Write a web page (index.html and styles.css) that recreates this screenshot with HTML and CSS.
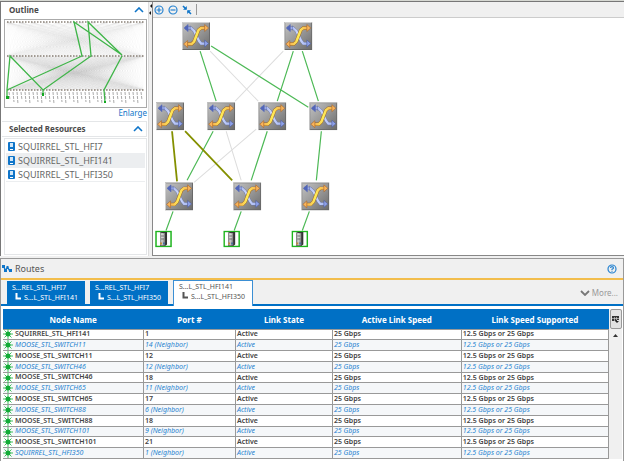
FILE: index.html
```html
<!DOCTYPE html>
<html lang="en">
<head>
<meta charset="utf-8">
<title>Topology</title>
<link rel="stylesheet" href="styles.css">
</head>
<body>
<svg class="defs" aria-hidden="true">
  <defs>
    <linearGradient id="metal" x1="0" y1="0" x2="1" y2="1">
      <stop offset="0" stop-color="#c2c2c2"/><stop offset=".5" stop-color="#989898"/><stop offset="1" stop-color="#6c6c6c"/>
    </linearGradient>
    <linearGradient id="gold" x1="0" y1="0" x2="1" y2="0">
      <stop offset="0" stop-color="#f5a850"/><stop offset=".5" stop-color="#ffee58"/><stop offset="1" stop-color="#f5a850"/>
    </linearGradient>
    <linearGradient id="sky" x1="0" y1="0" x2="1" y2="0">
      <stop offset="0" stop-color="#8fa0e0"/><stop offset=".5" stop-color="#cdd8fd"/><stop offset="1" stop-color="#a3b5f2"/>
    </linearGradient>
    <linearGradient id="steel" x1="0" y1="0" x2="1" y2="0">
      <stop offset="0" stop-color="#8b8b8b"/><stop offset=".4" stop-color="#d0d0d0"/><stop offset="1" stop-color="#777"/>
    </linearGradient>
    <symbol id="switch" viewBox="0 0 28 28">
      <rect width="28" height="28" fill="#666"/>
      <path d="M0 0H28L27 1H1V27L0 28Z" fill="#d2d2d2"/>
      <rect x="1" y="1" width="26" height="26" fill="url(#metal)"/>
      <path d="M3 6H9L12 9L17 19L19 21.500H24" fill="none" stroke="#6c77a6" stroke-width="3"/>
      <path d="M3 6H9L12 9L17 19L19 21.500H24" fill="none" stroke="url(#sky)" stroke-width="2.200"/>
      <path d="M6 2.500L2 6L6 9.500ZM8 3.500V8.500" fill="#5266b8" stroke="#5266b8" stroke-width=".6"/>
      <path d="M22.500 18L26.500 21.500L22.500 25Z" fill="#8fa2ea" stroke="#4c5a9a" stroke-width=".6"/>
      <path d="M4 22H9.500L12 19.500L16.500 8L19 6H24" fill="none" stroke="#9a6626" stroke-width="3.400"/>
      <path d="M4 22H9.500L12 19.500L16.500 8L19 6H24.100" fill="none" stroke="url(#gold)" stroke-width="2.500"/>
      <path d="M5.500 18.500L1.500 22L5.500 25.500Z" fill="#f8b45b" stroke="#a8642a" stroke-width=".6"/>
      <path d="M22.500 2.500L26.500 6L22.500 9.500Z" fill="#f8b45b" stroke="#a8642a" stroke-width=".6"/>
    </symbol>
    <symbol id="host" viewBox="0 0 17 17">
      <rect x="1" y="1" width="15" height="15" fill="#fff" stroke="#1fb41f" stroke-width="1.500"/>
      <path d="M5 2L7 1.500H12V14L10 15.500H5Z" fill="#333"/>
      <rect x="5" y="2.500" width="5" height="12.500" fill="url(#steel)"/>
      <path d="M6 4.500H9M6 6.500H9" stroke="#ddd"/>
      <path d="M6 5.500H9M6 8.500H9" stroke="#777"/>
      <rect x="5" y="12" width="2" height="2" fill="#c08a3c"/>
      <rect x="8" y="12" width="2" height="2" fill="#4a6a9c"/>
    </symbol>
    <symbol id="port" viewBox="0 0 7 9">
      <rect width="7" height="9" rx="1" fill="#0f75c9"/>
      <rect x="2" y="1" width="3" height="4" fill="#cfe6f8"/>
      <path d="M2 7.500H5" stroke="#fff"/>
    </symbol>
    <symbol id="chevron" viewBox="0 0 10 6">
      <path d="M1 5L5 1L9 5" fill="none" stroke="currentColor" stroke-width="1.600"/>
    </symbol>
    <symbol id="sun" viewBox="0 0 10 10">
      <path d="M5 0V10M0 5H10M1.500 1.500L8.500 8.500M8.500 1.500L1.500 8.500" stroke="#3fbf5d" stroke-width="1"/>
      <circle cx="5" cy="5" r="2.500" fill="#12ab37"/>
    </symbol>
    <symbol id="branch" viewBox="0 0 7 7">
      <path d="M1.500 0V5.500H6" fill="none" stroke="currentColor" stroke-width="2"/>
    </symbol>
  </defs>
</svg>

<main class="app">
  <section class="top">
    <aside class="side">
      <section>
        <h2 class="side-title">Outline<button class="icon-btn" aria-label="Collapse outline"><svg width="10" height="6"><use href="#chevron"/></svg></button></h2>
        <div class="outline-box">
          <svg class="outline" viewBox="5 20 141 87" role="img" aria-label="Fabric outline">
            <g id="fabric"></g>
            <path class="route" d="M7 90L82 56L74 22L122 55L88 22L91 56L43 90L10 56L7 90V97M43 90V94M122 56L104 90L105 102"/>
            <path class="ends" d="M6 96h3v3h-3zM42 93h2v3h-2zM104 101h2v2h-2z"/>
          </svg>
        </div>
        <a class="enlarge" href="#outline">Enlarge</a>
      </section>
      <section class="resources">
        <h2 class="side-title boxed">Selected Resources<button class="icon-btn" aria-label="Collapse resources"><svg width="10" height="6"><use href="#chevron"/></svg></button></h2>
        <ul class="list">
          <li><svg width="7" height="9"><use href="#port"/></svg>SQUIRREL_STL_HFI7</li>
          <li class="on"><svg width="7" height="9"><use href="#port"/></svg>SQUIRREL_STL_HFI141</li>
          <li><svg width="7" height="9"><use href="#port"/></svg>SQUIRREL_STL_HFI350</li>
        </ul>
      </section>
    </aside>
    <div class="splitter"><svg width="3" height="14"><path d="M1 4L3 2V6ZM0 11L2 9V13Z" fill="#111"/></svg></div>
    <section class="view">
      <div class="toolbar">
        <button class="icon-btn" aria-label="Zoom in"><svg width="10" height="10"><circle cx="5" cy="5" r="4" class="ring"/><path d="M2.500 5H7.500M5 2.500V7.500" class="ring"/></svg></button>
        <button class="icon-btn" aria-label="Zoom out"><svg width="10" height="10"><circle cx="5" cy="5" r="4" class="ring"/><path d="M2.500 5H7.500" class="ring"/></svg></button>
        <button class="icon-btn" aria-label="Fit"><svg width="10" height="10"><path d="M1 1L4 4M9 9L6 6" stroke="#0f75c9" stroke-width="1.600"/><path d="M4.800 1V4.800H1ZM5.200 9V5.200H9Z" fill="#0f75c9"/></svg></button>
        <span class="sep"></span>
      </div>
      <div class="canvas">
        <svg class="graph" viewBox="153 18 470 237" role="img" aria-label="Route topology">
          <path class="idle" d="M210 51L258 101M283 51L235 101M226 131L241 180M256 129L194 182"/>
          <path class="link" d="M200 51L216 101M211 46L308 107M293 51L277 101M302 51L318 101M213 131L187 180M267 131L251 180M321 131L316 180M173 211L166 230M241 211L234 230M309 211L302 230"/>
          <path class="hot" d="M172 131L177 181M185 131L232 180"/>
          <use href="#switch" x="182" y="22" width="28" height="28"/>
          <use href="#switch" x="284" y="22" width="28" height="28"/>
          <use href="#switch" x="156" y="102" width="28" height="28"/>
          <use href="#switch" x="207" y="102" width="28" height="28"/>
          <use href="#switch" x="258" y="102" width="28" height="28"/>
          <use href="#switch" x="309" y="102" width="28" height="28"/>
          <use href="#switch" x="165" y="182" width="28" height="28"/>
          <use href="#switch" x="233" y="182" width="28" height="28"/>
          <use href="#switch" x="301" y="182" width="28" height="28"/>
          <use href="#host" x="155" y="230" width="17" height="17"/>
          <use href="#host" x="223" y="230" width="17" height="17"/>
          <use href="#host" x="291" y="230" width="17" height="17"/>
        </svg>
      </div>
    </section>
  </section>

  <section class="routes">
    <header class="routes-head">
      <svg width="10" height="9"><path d="M1.500 2L3.500 6.500L5.500 3L8 7.500" fill="none" stroke="#0f75c9" stroke-width="1.300"/><path d="M0 1h3v3h-3zM2 5h3v3h-3zM4.500 2h2v3h-2zM7 5h3v3h-3z" fill="#0f75c9"/></svg>
      <h2>Routes</h2>
      <button class="icon-btn help" aria-label="Help"><svg width="10" height="10"><circle cx="5" cy="5" r="4" class="ring"/><path d="M3.500 4Q3.500 2.600 5 2.600T6.500 4Q6.500 4.800 5 5.300V6M5 6.700V7.700" class="ring"/></svg></button>
    </header>
    <nav class="tabs">
      <button class="tab"><span>S...REL_STL_HFI7</span><span class="to"><svg width="7" height="7"><use href="#branch"/></svg>S...L_STL_HFI141</span></button>
      <button class="tab"><span>S...REL_STL_HFI7</span><span class="to"><svg width="7" height="7"><use href="#branch"/></svg>S...L_STL_HFI350</span></button>
      <button class="tab active"><span>S...L_STL_HFI141</span><span class="to"><svg width="7" height="7"><use href="#branch"/></svg>S...L_STL_HFI350</span></button>
      <button class="more"><svg width="10" height="6"><path d="M1 1L5 5L9 1" fill="none" stroke="#777" stroke-width="1.800"/></svg>More...</button>
    </nav>
    <div class="grid">
      <table>
        <colgroup><col class="c1"><col class="c2"><col class="c3"><col class="c4"><col class="c5"></colgroup>
        <thead><tr><th>Node Name</th><th>Port #</th><th>Link State</th><th>Active Link Speed</th><th>Link Speed Supported</th></tr></thead>
        <tbody>
          <tr><td><svg><use href="#sun"/></svg>SQUIRREL_STL_HFI141</td><td>1</td><td>Active</td><td>25 Gbps</td><td>12.5 Gbps or 25 Gbps</td></tr>
          <tr><td><svg><use href="#sun"/></svg>MOOSE_STL_SWITCH11</td><td>14 (Neighbor)</td><td>Active</td><td>25 Gbps</td><td>12.5 Gbps or 25 Gbps</td></tr>
          <tr><td><svg><use href="#sun"/></svg>MOOSE_STL_SWITCH11</td><td>12</td><td>Active</td><td>25 Gbps</td><td>12.5 Gbps or 25 Gbps</td></tr>
          <tr><td><svg><use href="#sun"/></svg>MOOSE_STL_SWITCH46</td><td>12 (Neighbor)</td><td>Active</td><td>25 Gbps</td><td>12.5 Gbps or 25 Gbps</td></tr>
          <tr><td><svg><use href="#sun"/></svg>MOOSE_STL_SWITCH46</td><td>18</td><td>Active</td><td>25 Gbps</td><td>12.5 Gbps or 25 Gbps</td></tr>
          <tr><td><svg><use href="#sun"/></svg>MOOSE_STL_SWITCH65</td><td>11 (Neighbor)</td><td>Active</td><td>25 Gbps</td><td>12.5 Gbps or 25 Gbps</td></tr>
          <tr><td><svg><use href="#sun"/></svg>MOOSE_STL_SWITCH65</td><td>17</td><td>Active</td><td>25 Gbps</td><td>12.5 Gbps or 25 Gbps</td></tr>
          <tr><td><svg><use href="#sun"/></svg>MOOSE_STL_SWITCH88</td><td>6 (Neighbor)</td><td>Active</td><td>25 Gbps</td><td>12.5 Gbps or 25 Gbps</td></tr>
          <tr><td><svg><use href="#sun"/></svg>MOOSE_STL_SWITCH88</td><td>18</td><td>Active</td><td>25 Gbps</td><td>12.5 Gbps or 25 Gbps</td></tr>
          <tr><td><svg><use href="#sun"/></svg>MOOSE_STL_SWITCH101</td><td>9 (Neighbor)</td><td>Active</td><td>25 Gbps</td><td>12.5 Gbps or 25 Gbps</td></tr>
          <tr><td><svg><use href="#sun"/></svg>MOOSE_STL_SWITCH101</td><td>21</td><td>Active</td><td>25 Gbps</td><td>12.5 Gbps or 25 Gbps</td></tr>
          <tr><td><svg><use href="#sun"/></svg>SQUIRREL_STL_HFI350</td><td>1 (Neighbor)</td><td>Active</td><td>25 Gbps</td><td>12.5 Gbps or 25 Gbps</td></tr>
        </tbody>
      </table>
      <div class="scroll">
        <button class="columns" aria-label="Choose columns"><svg width="7" height="7"><path d="M0 0h7v4h-2v1h-5z" fill="#333"/><path d="M0 2.500H7M2.500 1V5M4.500 1V4" stroke="#ddd" stroke-width=".6"/><path d="M3 5h4l-2 2z" fill="#222"/></svg></button>
        <button class="icon-btn up" aria-label="Scroll up"><svg width="5" height="3"><path d="M0 3L2.500 0L5 3Z" fill="#333"/></svg></button>
      </div>
    </div>
  </section>
</main>
<script src="outline.js"></script>
</body>
</html>
```
FILE: styles.css
```css
* { box-sizing: border-box; }
body {
  margin: 0;
  background: #f0f0f0;
  color: #4a4a4a;
  font: 9px/12px "Noto Sans", "Open Sans", sans-serif;
}
h2, ul { margin: 0; padding: 0; }
svg { display: block; flex: none; }
button { border: 0; margin: 0; padding: 0; background: none; font: inherit; color: inherit; }
.defs { position: absolute; width: 0; height: 0; }
.icon-btn { display: flex; color: #0f75c9; }
.ring { fill: none; stroke: #2783d0; stroke-width: 1.2; }

.app {
  display: flex;
  flex-direction: column;
  height: 100vh;
  border-top: 1px solid #d6d8d2;
}
.top {
  display: flex;
  flex: 1;
  min-height: 0;
  border-top: 1px solid #777;
  border-left: 1px solid #777;
}
.side {
  display: flex;
  flex-direction: column;
  width: 148px;
  padding: 0 1px 1px 1px;
  background: #fff;
  border-right: 1px solid #ddd;
}
.side-title {
  display: flex;
  justify-content: space-between;
  align-items: center;
  height: 16px;
  padding: 0 3px 0 7px;
  font-size: 8px;
  font-weight: 700;
}
.outline-box {
  margin: 1px 0 0 2px;
  border: 1px solid #aaa;
}
.outline { width: 100%; }
.haze { stroke: #777; stroke-width: 1; opacity: .025; fill: none; }
.dots { stroke: #8a8177; stroke-width: 1.5; stroke-dasharray: 1.5 1.5; }
.hairs { stroke: #aaa; stroke-width: 1; stroke-dasharray: 3 1; }
.route { fill: none; stroke: #3fb548; stroke-width: 1.3; }
.ends { fill: #12a820; }
.enlarge {
  display: block;
  height: 12px;
  line-height: 10px;
  text-align: right;
  font-size: 8px;
  color: #0f75c9;
  text-decoration: none;
}
.resources { display: flex; flex: 1; flex-direction: column; }
.resources .side-title { margin-top: 1px; }
.boxed { border: 1px solid #e4e6e8; border-left: 0; }
.list {
  flex: 1;
  margin: 1px 0 0 2px;
  padding: 1px 1px 0;
  border: 1px solid #e4e6e8;
  list-style: none;
}
.list li {
  display: flex;
  align-items: center;
  gap: 3px;
  height: 14px;
  padding-left: 2px;
  color: #666;
  border-bottom: 1px solid #eceef0;
}
.list .on { background: #eceef0; }
.splitter { width: 3px; }
.view {
  display: flex;
  flex: 1;
  flex-direction: column;
  min-width: 0;
  border-left: 1px solid #888;
}
.toolbar {
  display: flex;
  align-items: center;
  gap: 4px;
  height: 16px;
  padding-left: 1px;
  border-bottom: 1px solid #ccc;
}
.sep { width: 1px; height: 11px; background: #999; }
.canvas {
  flex: 1;
  min-height: 0;
  overflow: hidden;
  background: #fff;
  border-bottom: 1px solid #888;
}
.graph { width: 100%; }
.idle { stroke: #ddd; fill: none; }
.link { stroke: #4db956; stroke-width: 1.2; fill: none; }
.hot { stroke: #849000; stroke-width: 1.8; fill: none; }

.routes {
  margin-top: 2px;
  border: 1px solid #999;
  border-width: 1px 1px 0;
}
.routes-head {
  display: flex;
  align-items: center;
  gap: 3px;
  height: 21px;
  padding: 0 6px 0 1px;
  border-bottom: 2px solid #f2bd4c;
}
.routes-head h2 { font-size: 9px; font-weight: 400; color: #555; }
.help { margin-left: auto; }
.tabs {
  display: flex;
  align-items: flex-end;
  gap: 5px;
  height: 26px;
  padding: 0 5px 0 6px;
  border-bottom: 2px solid #0070c5;
}
.tab {
  width: 78px;
  height: 23px;
  padding: 0 0 0 5px;
  background: #0070c5;
  color: #fff;
  font-size: 7px;
  line-height: 10px;
  text-align: left;
  white-space: nowrap;
}
.tab span { display: block; }
.tab .to { display: flex; gap: 2px; padding-left: 3px; }
.active {
  width: 80px;
  height: 26px;
  margin-bottom: -2px;
  padding-bottom: 3px;
  background: #fff;
  color: #555;
  border: 1px solid #3b8fd4;
  border-bottom: 0;
}
.more {
  display: flex;
  align-items: center;
  gap: 2px;
  margin: 0 0 5px auto;
  font-size: 8px;
  color: #999;
}
.grid {
  display: flex;
  padding: 3px 1px 2px 2px;
  background: #fff;
}
table {
  flex: 1;
  height: 150px;
  border-collapse: collapse;
  table-layout: fixed;
  font-size: 7px;
  line-height: 8px;
}
.c1 { width: 23.2%; }
.c2 { width: 15.2%; }
.c3 { width: 16%; }
.c4 { width: 21.3%; }
.c5 { width: 24.3%; }
th {
  height: 20px;
  padding: 3px 0 0;
  background: #0070c5;
  color: #fff;
  font-size: 8px;
  line-height: 12px;
  font-weight: 700;
}
td {
  padding: 0 1px;
  background: #fff;
  border: 1px solid #999;
  font-weight: 600;
  color: #444;
  white-space: nowrap;
}
td:first-child { border-left: 0; padding-left: 0; }
td svg { display: inline-block; width: 10px; height: 10px; margin: -1px 2px -1px 0; vertical-align: middle; }
tbody tr:nth-child(even) td { background: #f5f7f9; color: #2783d0; font-style: italic; font-weight: 400; }
.scroll {
  display: flex;
  flex-direction: column;
  align-items: center;
  gap: 5px;
  width: 13px;
  background: #f0f0f0;
}
.columns {
  display: flex;
  align-items: center;
  justify-content: center;
  width: 12px;
  height: 20px;
  background: #e3e3e3;
  border: 1px solid #999;
  border-radius: 2px;
}
```
FILE: outline.js
```js
// Draws the faint all-to-all links between the three switch tiers of the outline.
const parts = [];
const tiers = [[22, 56, 12, 31], [56, 90, 31, 24]];
for (const [y1, y2, n, m] of tiers) {
  for (let i = 0; i < n; i++) {
    for (let j = 0; j < m; j++) {
      const a = 7 + (136 * i) / (n - 1);
      const b = 7 + (136 * j) / (m - 1);
      parts.push(`<path class="haze" d="M${a} ${y1}L${b} ${y2}"/>`);
    }
  }
}
for (const y of [22, 56, 90]) parts.push(`<path class="dots" d="M7 ${y}H144"/>`);
for (let x = 9; x < 145; x += 4) {
  parts.push(`<path class="hairs" d="M${x} 92L${x + 1} ${100 + (x % 3) * 2}"/>`);
}
document.getElementById("fabric").innerHTML = parts.join("");
```
